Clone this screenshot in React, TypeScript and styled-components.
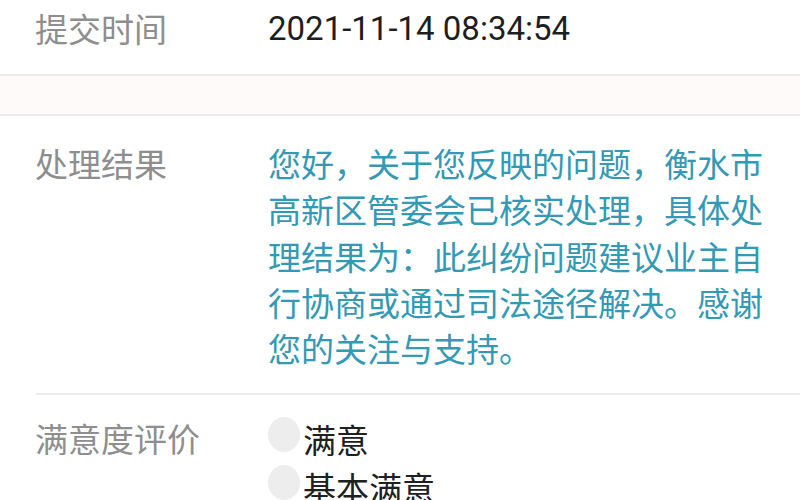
import React from 'react';
import styled, { createGlobalStyle } from 'styled-components';

const GlobalStyle = createGlobalStyle`
  html, body {
    margin: 0;
    padding: 0;
    background: #ffffff;
  }
  body {
    width: 800px;
    height: 500px;
    overflow: hidden;
    font-family: Roboto, "Noto Sans CJK SC", "Noto Sans", sans-serif;
  }
`;

const Page = styled.div`
  width: 800px;
  height: 500px;
  overflow: hidden;
  background: #ffffff;
`;

const Row = styled.div<{ $top?: number; $bottom?: number }>`
  display: flex;
  align-items: flex-start;
  padding: ${({ $top }) => $top ?? 0}px 0 ${({ $bottom }) => $bottom ?? 0}px 35px;
`;

const Label = styled.div`
  width: 233px;
  flex-shrink: 0;
  font-size: 33px;
  line-height: 46px;
  color: #8e8e8e;
  font-family: "Noto Sans CJK SC", sans-serif;
`;

const DateValue = styled.div`
  font-size: 33px;
  line-height: 46px;
  margin-top: 1px;
  color: #1e1e1e;
  font-family: Roboto, "Noto Sans", sans-serif;
`;

const Band = styled.div`
  height: 38px;
  background: #fefafa;
  border-top: 2px solid #e9e9e9;
  border-bottom: 2px solid #ececec;
`;

const Reply = styled.p`
  margin: 0;
  width: 505px;
  font-size: 33px;
  line-height: 46.3px;
  color: #3399b5;
  font-family: "Noto Sans CJK SC", sans-serif;
`;

const Divider = styled.div`
  height: 2px;
  margin-left: 36px;
  background: #ececec;
`;

const Options = styled.div`
  display: flex;
  flex-direction: column;
`;

const Option = styled.label`
  display: flex;
  align-items: center;
  height: 48px;
  font-size: 33px;
  color: #202020;
  font-family: "Noto Sans CJK SC", sans-serif;
`;

const Radio = styled.span`
  width: 32px;
  height: 35px;
  border-radius: 50%;
  background: #ededed;
  margin-right: 3px;
  margin-top: -10px;
  flex-shrink: 0;
`;

const App = () => {
  const options = ['满意', '基本满意'];

  return (
    <Page>
      <GlobalStyle />
      <Row $top={5} $bottom={22}>
        <Label>提交时间</Label>
        <DateValue>2021-11-14 08:34:54</DateValue>
      </Row>
      <Band />
      <Row $top={24} $bottom={22}>
        <Label>处理结果</Label>
        <Reply>
          您好，关于您反映的问题，衡水市高新区管委会已核实处理，具体处理结果为：此纠纷问题建议业主自行协商或通过司法途径解决。感谢您的关注与支持。
        </Reply>
      </Row>
      <Divider />
      <Row $top={20}>
        <Label>满意度评价</Label>
        <Options>
          {options.map(option => (
            <Option key={option}>
              <Radio />
              {option}
            </Option>
          ))}
        </Options>
      </Row>
    </Page>
  );
};

export default App;
